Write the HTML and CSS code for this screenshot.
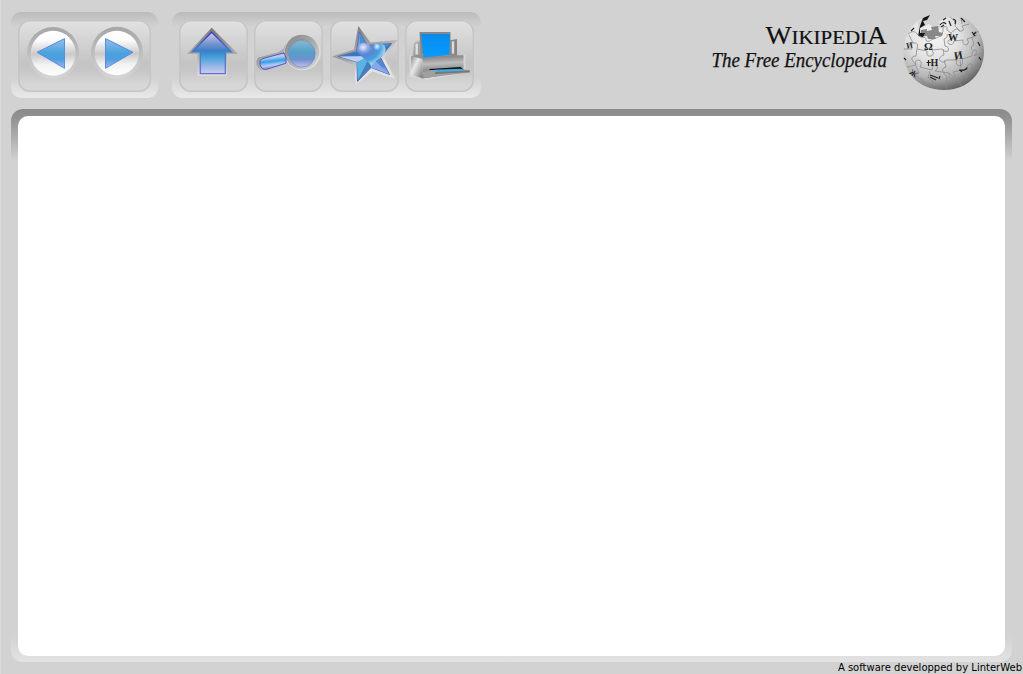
FILE: index.html
```html
<!DOCTYPE html>
<html lang="en">
<head>
<meta charset="utf-8">
<title>Wikipedia</title>
<link rel="stylesheet" href="styles.css">
</head>
<body>
<div class="app">
  <header class="toolbar">
    <nav class="group">
      <div class="key key-wide">
        <svg viewBox="18 20 133 72" class="art">
          <defs>
            <linearGradient id="ring" x1="0" y1="0" x2="0" y2="1"><stop offset="0" stop-color="#a6a6a6"/><stop offset=".5" stop-color="#bdbdbd"/><stop offset="1" stop-color="#d6d6d6"/></linearGradient>
            <linearGradient id="disc" x1="0" y1="0" x2="0" y2="1"><stop offset="0" stop-color="#fff"/><stop offset=".22" stop-color="#fbfbfb"/><stop offset=".52" stop-color="#c9c9c9"/><stop offset=".75" stop-color="#f2f2f2"/><stop offset="1" stop-color="#fff"/></linearGradient>
            <linearGradient id="tri" x1="0" y1="0" x2="0" y2="1"><stop offset="0" stop-color="#9bbcec"/><stop offset=".48" stop-color="#4aa3df"/><stop offset=".7" stop-color="#509de0"/><stop offset="1" stop-color="#a4b8ef"/></linearGradient>
          </defs>
          <circle cx="53" cy="53" r="26" fill="url(#ring)"/><circle cx="53.2" cy="53.3" r="22.5" fill="url(#disc)"/>
          <path d="M37 52.3 64.5 38.6V68.3Z" fill="url(#tri)" stroke="#568fdf"/>
          <circle cx="117" cy="52.7" r="26" fill="url(#ring)"/><circle cx="116.8" cy="53" r="22.3" fill="url(#disc)"/>
          <path d="M133 52.3 105.5 38.6V68.3Z" fill="url(#tri)" stroke="#568fdf"/>
        </svg>
      </div>
    </nav>
    <nav class="group">
      <div class="key">
        <svg viewBox="179 20 69 72" class="art">
          <defs>
            <linearGradient id="up" x1="0" y1="0" x2="0" y2="1"><stop offset="0" stop-color="#d0cff0"/><stop offset=".25" stop-color="#8299d2"/><stop offset=".45" stop-color="#397dc7"/><stop offset=".6" stop-color="#45a0db"/><stop offset=".8" stop-color="#92b4e4"/><stop offset="1" stop-color="#cccdf0"/></linearGradient>
            <linearGradient id="upEdge" x1="0" y1="0" x2="0" y2="1"><stop offset="0" stop-color="#777"/><stop offset=".5" stop-color="#a7a7a7"/><stop offset="1" stop-color="#dedede"/></linearGradient>
            <linearGradient id="upLine" x1="0" y1="0" x2="0" y2="1"><stop offset="0" stop-color="#3c38b8"/><stop offset=".5" stop-color="#3b83cd"/><stop offset="1" stop-color="#6670d2"/></linearGradient>
          </defs>
          <path d="M211.7 27.8 238 54H227V76H197.5V54H187Z" fill="url(#upEdge)"/>
          <path d="M211.7 32.2 231.5 51.8H225.3V73.7H200.3V51.8H192Z" fill="url(#up)" stroke="url(#upLine)" stroke-width="1.3"/>
        </svg>
      </div>
      <div class="key">
        <svg viewBox="254.5 20 69 72" class="art">
          <defs>
            <linearGradient id="rim" x1="0" y1="0" x2="1" y2="1"><stop offset="0" stop-color="#858585"/><stop offset=".5" stop-color="#aaa"/><stop offset="1" stop-color="#ddd"/></linearGradient>
            <linearGradient id="lens" x1=".5" y1="0" x2=".5" y2="1"><stop offset="0" stop-color="#8ab9cf"/><stop offset=".45" stop-color="#54a0c9"/><stop offset=".72" stop-color="#7090cf"/><stop offset="1" stop-color="#c3c3ec"/></linearGradient>
            <linearGradient id="grip" x1=".4" y1="0" x2=".6" y2="1"><stop offset="0" stop-color="#777bd5"/><stop offset=".25" stop-color="#c6d0ed"/><stop offset=".5" stop-color="#339fe8"/><stop offset=".72" stop-color="#b5cdf0"/><stop offset="1" stop-color="#6d73d5"/></linearGradient>
          </defs>
          <path d="M259 57.5 278 52.500Q284.500 50 286 44L291 62Q287 61 285 64L265 70Q259 71 257 64Q256.500 59.500 259 57.500Z" fill="url(#rim)"/>
          <circle cx="303" cy="52.3" r="18.2" fill="#ddd"/>
          <circle cx="302.500" cy="52" r="17.3" fill="url(#rim)"/>
          <circle cx="302.500" cy="53.5" r="14.3" fill="#8a8a8a"/><circle cx="302.800" cy="54.2" r="14.2" fill="#c1c5c9"/>
          <circle cx="302.300" cy="53.7" r="13.4" fill="url(#lens)" stroke="#7185bd" stroke-width=".7"/>
          <path d="M263.500 58.5 284.500 52.800Q287.500 57.500 286.500 63.200L267.500 69.200Q262.300 70.500 260.500 64.500Q259.800 60 263.500 58.5Z" fill="url(#grip)" stroke="#5458c7"/>
        </svg>
      </div>
      <div class="key">
        <svg viewBox="330 20 69 72" class="art">
          <defs>
            <linearGradient id="starEdge" x1="0" y1="0" x2=".55" y2="1"><stop offset="0" stop-color="#6e6e6e"/><stop offset=".55" stop-color="#aaa"/><stop offset=".8" stop-color="#e2e2e2"/></linearGradient>
            <linearGradient id="star" x1="0" y1="0" x2="1" y2="1"><stop offset="0" stop-color="#b4c7f2"/><stop offset=".45" stop-color="#479dd5"/><stop offset=".75" stop-color="#5584cb"/><stop offset="1" stop-color="#c4d5ff"/></linearGradient>
            <radialGradient id="heart" cx=".22" cy=".18" r=".8"><stop offset="0" stop-color="#cdcdf4"/><stop offset=".4" stop-color="#5a85d2"/><stop offset=".72" stop-color="#439fdc"/><stop offset="1" stop-color="#b3daf2"/></radialGradient>
            <radialGradient id="shine"><stop offset="0" stop-color="#eaf0ff"/><stop offset="1" stop-color="#eaf0ff" stop-opacity="0"/></radialGradient>
          </defs>
          <path d="M358.300 26 370.500 42.500 397.500 40 384.500 57.500 395 79 372.500 71.500 356 84.500 354 65 332 56.500 354 49.500Z" fill="url(#starEdge)"/>
          <path d="M359.500 32 367.500 45.500 391.500 43.500 380.500 57.500 389.500 74.500 371 67.500 357.500 81.500 357 62 338.500 56.500 356.500 51.500Z" fill="url(#star)" stroke="#4b65bd" stroke-width=".9"/>
          <path d="M339 56.500 357 62 370 56Z" fill="#bccff5"/><path d="M339 56.300 357 52 370 56Z" fill="#3e76bd"/>
          <path d="M359.500 33 360 53 370 55 367 45Z" fill="#4a8ed0"/><path d="M391 44 380.500 57 370 55Z" fill="#3879ba"/>
          <path d="M370 56 371 67.500 389 74Z" fill="#83aaf0"/><path d="M370 56 357 62 358 80Z" fill="#5ab4e1"/><path d="M370 57 371 67.500 358 80Z" fill="#477dbb"/>
          <path d="M371.500 66.500C369 60 357.500 57 357.500 48.500C357.500 41.500 367.500 41 371 47C375 41 385 42 385.500 49C386 57 374 59.500 371.500 66.500Z" fill="url(#heart)"/>
          <circle cx="377" cy="46.500" r="4" fill="url(#shine)"/><circle cx="363" cy="47.500" r="4.500" fill="url(#shine)" opacity=".7"/>
        </svg>
      </div>
      <div class="key">
        <svg viewBox="405.500 20 69 72" class="art">
          <defs>
            <linearGradient id="metal" x1="0" y1="0" x2="1" y2=".25"><stop offset="0" stop-color="#e6e6e6"/><stop offset=".2" stop-color="#aaa"/><stop offset="1" stop-color="#858585"/></linearGradient>
            <linearGradient id="front" x1="0" y1="0" x2=".1" y2="1"><stop offset="0" stop-color="#777"/><stop offset=".38" stop-color="#bdbdbd"/><stop offset=".6" stop-color="#979797"/><stop offset="1" stop-color="#707070"/></linearGradient>
            <linearGradient id="side" x1="0" y1="0" x2="1" y2="1"><stop offset="0" stop-color="#8e8e8e"/><stop offset=".4" stop-color="#e8e8e8"/><stop offset="1" stop-color="#747474"/></linearGradient>
            <linearGradient id="sheet" x1="0" y1="0" x2="0" y2="1"><stop offset="0" stop-color="#078ced"/><stop offset="1" stop-color="#079bff"/></linearGradient>
          </defs>
          <path d="M410 55H466V71L471 72 427 80 410 77Z" fill="#ddd" opacity=".7"/>
          <path d="M413.500 42 421 40H452L457.500 39V57H413.500Z" fill="url(#metal)"/><path d="M415.500 43H419V55H415.500ZM452 41H455V54H452Z" fill="#ddd" stroke="#8b8b8b" stroke-width=".7"/>
          <path d="M420 32H451V56H421Z" fill="#878787"/>
          <path d="M411.500 56 424 54 464 55.500 461 58 422 60Z" fill="#909090"/>
          <path d="M421.500 34H450.500L450 54.500 424 58Z" fill="url(#sheet)"/>
          <path d="M423 59 427 57 464 55.500V72L423 78.500Z" fill="url(#front)"/>
          <path d="M411.500 56 423 59V78.500L411.500 74.500Z" fill="url(#side)"/>
          <path d="M430 69 461 67 464 70H430Z" fill="#111"/>
          <path d="M423.500 72 436 69.800 470.500 70V72.500L424 78Z" fill="#a0a0a0"/>
          <path d="M432.500 70 460 68.700 468 70 441 72.800Z" fill="#3caee7"/>
          <path d="M436 72 470 70.500V72.300L435 74Z" fill="#777"/>
        </svg>
      </div>
    </nav>
    <svg class="brand" viewBox="700 10 290 84">
      <defs>
        <radialGradient id="globe" cx=".38" cy=".28" r=".75"><stop offset="0" stop-color="#f5f5f5"/><stop offset=".42" stop-color="#e2e2e2"/><stop offset=".74" stop-color="#b4b4b4"/><stop offset="1" stop-color="#606060"/></radialGradient>
      </defs>
      <text class="wordmark" x="765.500" y="44" textLength="121.500" lengthAdjust="spacingAndGlyphs"><tspan class="capital">W</tspan>IKIPEDI<tspan class="capital">A</tspan></text>
      <text class="tagline" x="711.500" y="67" textLength="175.500" lengthAdjust="spacingAndGlyphs">The Free Encyclopedia</text>
      <path d="M926 17Q914 21 908 33Q902 43 903.500 55C905 76 922 90 944 90C968 90 984 73 984 51C984 35 974 21 960 16Q956 14.500 952 18L946 17 939 22 941 27 937 31 929 24 921 28 919 34 918 22Z" fill="url(#globe)"/>
      <path d="M921 30 927 29 927 31 932 30 931 27 938 26 939 32 943 33 942 36 935 36 936 39 928 39 927 36 920 37Z" fill="#888"/>
      <path d="M923 18 930 15 927 20 923 21 925 25 920 28 920 33 925 33 923 37 918 36 920 26Z" fill="#161616"/>
      <g class="seams">
        <path d="M908 34Q914 29 917 34L922 38Q926 36 926 40Q927 43 931 40L941 36Q944 31 943 27Q948 25 947 30L951 33Q958 26 959 31Q966 32 962 26L969 24"/>
        <path d="M904 49 912 49Q910 42 914 43Q919 42 917 49L927 51Q926 57 931 56Q935 55 932 50L942 49Q945 53 948 51Q950 47 945 46L944 39Q948 38 947 34M943 49 944 55Q938 57 940 61Q945 64 946 60L957 60Q955 65 959 66Q964 65 962 59L972 56Q972 49 976 50Q978 53 974 56L984 52"/>
        <path d="M907 67 916 65Q914 60 919 60Q923 62 920 67L932 70Q932 64 937 66Q939 69 935 71L949 73Q948 79 953 79Q957 76 953 72L967 69Q967 63 971 64Q975 66 971 69L979 68"/>
        <path d="M951 33 951 39Q946 41 949 44Q953 46 954 41L963 40Q962 45 967 45Q970 42 967 39L976 36Q975 30 979 32M972 37 974 45Q970 46 972 50M917 49 916 56Q911 56 912 60L916 65M944 60 946 67Q941 68 943 72L947 77 946 89M916 66 919 73Q915 74 918 78L922 79 926 86M930 71 928 78Q934 80 933 84M949 73 958 81 962 86M967 69 967 78"/>
        <path d="M950 17Q957 22 955 26L960 31M961 18 962 24M909 35 913 43M960 60 961 68"/>
      </g>
      <g class="glyphs">
        <text x="924" y="50" font-size="11">Ω</text><text x="948" y="41" font-size="10">W</text><text x="954" y="59" font-size="11" transform="rotate(-10 958 55)">И</text>
        <text x="930.500" y="66" font-size="10">H</text>
        <text x="906" y="48" font-size="8" transform="rotate(-12 909 44)">И</text>
        <text x="910" y="75" font-size="8" transform="rotate(35 912 72)">Ж</text>
        <path d="M926.500 62.500H931M928.500 60V66M959 70Q966 71 967 67.500M960 70 962 72M961 18 965 22M972 32 975 36M973 35 976 32M978 42 980 46M979 57 981 60M911 31 914 28M904 58 906 60M930 75 938 78M940 76 939 79M930 77 936 80" class="marks"/>
        <path d="M940 25Q943 21 946 24M941 27 944 25M943 20 946 18M949 21 951 26M953 19Q957 20 955 24" class="marks"/>
      </g>
    </svg>
  </header>
  <main class="frame"><div class="page"></div></main>
  <footer class="credit">A software developped by LinterWeb</footer>
</div>
</body>
</html>
```
FILE: styles.css
```css
* { box-sizing: border-box; }
body { margin: 0; background: #d2d2d2; overflow: hidden; }
.app {
  width: 1023px;
  height: 674px;
  display: flex;
  flex-direction: column;
  padding: 12px 0 0 10px;
  border-left: 1px solid #dadada;
}
.toolbar { display: flex; height: 97px; align-items: flex-start; }
.group {
  display: flex;
  gap: 6.3px;
  height: 85.500px;
  padding: 8px 7px 5px;
  margin-right: 14px;
  border-radius: 10px;
  background: linear-gradient(#bbb, #d2d2d2 17%, #d2d2d2 76%, #e9e9e9);
}
.key {
  width: 69px;
  height: 72px;
  border-radius: 12px;
  background: linear-gradient(#e2e2e2, #c4c4c4 60%, #c6c6c6 70%, #d5d5d5 88%, #d8d8d8);
  box-shadow: inset 0 0 0 1.5px #c5c5c5;
}
.key-wide { width: 133px; }
.art { display: block; width: 100%; height: 100%; }
.brand { width: 290px; height: 84px; margin: -2px 33px 0 auto; }
.wordmark, .tagline { font-family: "Liberation Serif", serif; fill: #111; }
.wordmark { font-size: 19px; stroke: #111; stroke-width: .2px; }
.capital { font-size: 25px; }
.tagline { font-size: 20px; font-style: italic; stroke: #111; stroke-width: .25px; }
.seams { fill: none; stroke: #8b8b8b; stroke-width: .8px; }
.glyphs { font-family: "Liberation Serif", "DejaVu Sans", serif; font-weight: bold; fill: #222; }
.marks { fill: none; stroke: #222; stroke-width: 1.2px; }
.frame {
  width: 1001px;
  height: 553px;
  padding: 7px 7px 6px;
  border-radius: 12px;
  background: linear-gradient(#8a8a8a, #929292 10px, #d2d2d2 52px, #d2d2d2 527px, #e3e3e3);
}
.page { height: 540px; border-radius: 10px; background: #fff; }
.credit {
  align-self: flex-end;
  height: 12px;
  padding-right: 1px;
  font: 10px/11px "DejaVu Sans", sans-serif;
  color: #000;
  white-space: nowrap;
}
```
